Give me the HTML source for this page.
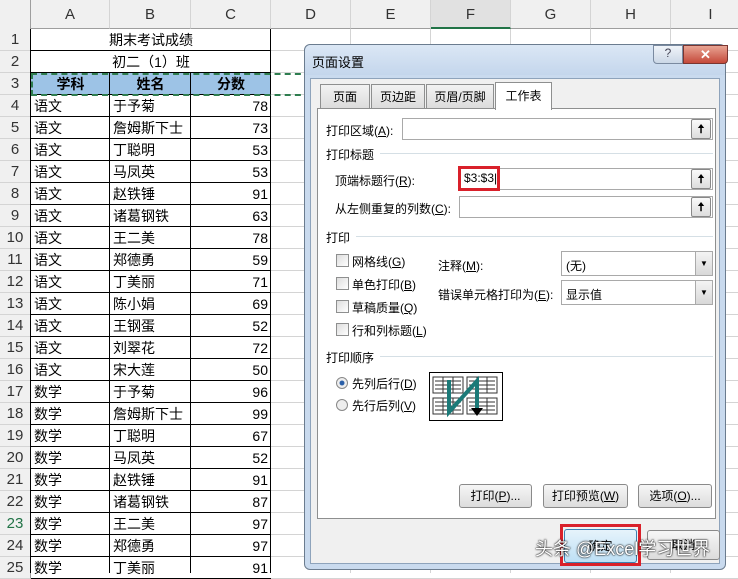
<!DOCTYPE html><html><head><meta charset="utf-8"><style>
*{margin:0;padding:0;box-sizing:border-box}
body{width:738px;height:573px;overflow:hidden;background:#fff;font-family:"Liberation Sans","Noto Sans CJK SC",sans-serif;font-size:14px;position:relative}
.a{position:absolute}
.hdr{background:#f0f0f0;color:#333;text-align:center;font-size:15px}
.c{position:absolute;height:22px;line-height:22px;font-size:14px;white-space:nowrap}
.d{font-size:12px;color:#000;position:absolute;white-space:nowrap}
.box{position:absolute;background:#fff;border:1px solid #a9a9a9}
.up{position:absolute;width:20px;height:20px;border:1px solid #888;border-radius:2px;background:linear-gradient(#fafafa,#ddd);font-size:12px;text-align:center;line-height:18px;font-weight:bold}
.btn{position:absolute;height:24px;border:1px solid #8a8a8a;border-radius:3px;background:linear-gradient(#f6f6f6,#dcdcdc);font-size:12px;text-align:center;line-height:22px}
.cb{position:absolute;width:13px;height:13px;border:1px solid #8e8f8f;background:linear-gradient(135deg,#ddd,#fff)}
.sep{position:absolute;height:1px;background:#d5dfe5}
</style></head><body>
<div class="a hdr" style="left:0;top:0;width:738px;height:29px;border-bottom:1px solid #9e9e9e"></div>
<div class="a hdr" style="left:0;top:0;width:31px;height:573px;border-right:1px solid #9e9e9e"></div>
<div id="g"></div>
<script>
var cols=[[31,110,'A'],[110,191,'B'],[191,271,'C'],[271,351,'D'],[351,431,'E'],[431,511,'F'],[511,591,'G'],[591,671,'H'],[671,751,'I']];
var h='';
cols.forEach(function(c){h+='<div class="a hdr" style="left:'+c[0]+'px;top:0;width:'+(c[1]-c[0])+'px;height:29px;line-height:29px;border-right:1px solid #d4d4d4;border-bottom:1px solid #9e9e9e;'+(c[2]=='F'?'background:#e1e1e1;border-bottom:2px solid #217346;':'')+'">'+c[2]+'</div>';});
var data=[['语文','于予菊',78],['语文','詹姆斯下士',73],['语文','丁聪明',53],['语文','马凤英',53],['语文','赵铁锤',91],['语文','诸葛钢铁',63],['语文','王二美',78],['语文','郑德勇',59],['语文','丁美丽',71],['语文','陈小娟',69],['语文','王钢蛋',52],['语文','刘翠花',72],['语文','宋大莲',50],['数学','于予菊',96],['数学','詹姆斯下士',99],['数学','丁聪明',67],['数学','马凤英',52],['数学','赵铁锤',91],['数学','诸葛钢铁',87],['数学','王二美',97],['数学','郑德勇',97],['数学','丁美丽',91]];
for(var r=0;r<25;r++){var y=29+r*22;
h+='<div class="a hdr" style="left:0;top:'+y+'px;width:31px;height:22px;line-height:22px;border-bottom:1px solid #d4d4d4;border-right:1px solid #9e9e9e;'+(r==22?'color:#217346;':'')+'">'+(r+1)+'</div>';
h+='<div class="a" style="left:31px;top:'+(y+21)+'px;width:707px;height:1px;background:#d4d4d4"></div>';}
[271,351,431,511,591,671].forEach(function(x){h+='<div class="a" style="left:'+(x-1)+'px;top:29px;width:1px;height:544px;background:#d4d4d4"></div>';});
h+='<div class="c" style="left:31px;top:29px;width:240px;text-align:center">期末考试成绩</div>';
h+='<div class="c" style="left:31px;top:51px;width:240px;text-align:center">初二（1）班</div>';
h+='<div class="a" style="left:31px;top:73px;width:240px;height:22px;background:#9dc3e6"></div>';
[['学科',31,110],['姓名',110,191],['分数',191,271]].forEach(function(t){h+='<div class="c" style="left:'+t[1]+'px;top:73px;width:'+(t[2]-t[1])+'px;text-align:center;font-weight:bold">'+t[0]+'</div>';});
for(var i=0;i<data.length;i++){var y=95+i*22;
h+='<div class="c" style="left:34px;top:'+y+'px">'+data[i][0]+'</div><div class="c" style="left:113px;top:'+y+'px">'+data[i][1]+'</div><div class="c" style="left:191px;top:'+y+'px;width:77px;text-align:right">'+data[i][2]+'</div>';}
// black borders for table
for(var r=0;r<25;r++){var y=29+r*22;if(r>=2)h+='<div class="a" style="left:31px;top:'+(y+21)+'px;width:240px;height:1px;background:#000"></div>';}
h+='<div class="a" style="left:30px;top:29px;width:1px;height:544px;background:#000"></div>';
h+='<div class="a" style="left:270px;top:29px;width:1px;height:544px;background:#000"></div>';
h+='<div class="a" style="left:31px;top:50px;width:240px;height:1px;background:#000"></div>';
h+='<div class="a" style="left:31px;top:72px;width:240px;height:1px;background:#000"></div>';
h+='<div class="a" style="left:109px;top:73px;width:1px;height:500px;background:#000"></div>';
h+='<div class="a" style="left:190px;top:73px;width:1px;height:500px;background:#000"></div>';
h+='<div class="a" style="left:31px;top:73px;width:280px;height:23px;border:2px dashed #2e7d4f"></div>';
document.getElementById('g').innerHTML=h;
</script>
<!-- dialog -->
<div class="a" style="left:304px;top:44px;width:422px;height:526px;border:1px solid #6b7c8f;border-radius:6px;background:#c9daee"></div>
<div class="a" style="left:305px;top:45px;width:420px;height:30px;border-radius:6px 6px 0 0;background:linear-gradient(#dbe7f5,#c4d6ec)"></div>
<div class="d" style="left:312px;top:52px;font-size:13px">页面设置</div>
<div class="a" style="left:653px;top:45px;width:30px;height:19px;border:1px solid #7a8aa0;border-radius:0 0 0 4px;background:linear-gradient(#f0f4f9,#cbd7e6);text-align:center;font-size:12px;color:#445">?</div>
<div class="a" style="left:683px;top:45px;width:45px;height:19px;border:1px solid #7a3530;border-radius:0 0 4px 0;background:linear-gradient(#e8a493,#c5493a);text-align:center;font-size:13px;color:#fff;font-weight:bold;line-height:17px">✕</div>
<div class="a" style="left:310px;top:78px;width:410px;height:486px;background:#f0f0f0;border:1px solid #8ea3bb"></div>
<div class="a" style="left:317px;top:108px;width:399px;height:411px;background:#fff;border:1px solid #8e8f8f"></div>
<div class="a" style="left:320px;top:84px;width:50px;height:25px;border:1px solid #8e8f8f;background:linear-gradient(#f2f2f2,#dcdcdc);font-size:12px;text-align:center;line-height:24px">页面</div>
<div class="a" style="left:371px;top:84px;width:54px;height:25px;border:1px solid #8e8f8f;background:linear-gradient(#f2f2f2,#dcdcdc);font-size:12px;text-align:center;line-height:24px">页边距</div>
<div class="a" style="left:426px;top:84px;width:68px;height:25px;border:1px solid #8e8f8f;background:linear-gradient(#f2f2f2,#dcdcdc);font-size:12px;text-align:center;line-height:24px">页眉/页脚</div>
<div class="a" style="left:495px;top:82px;width:57px;height:28px;border:1px solid #8e8f8f;border-bottom:none;background:#fff;font-size:12px;text-align:center;line-height:26px">工作表</div>
<div class="d" style="left:326px;top:122px">打印区域(<u>A</u>):</div>
<div class="box" style="left:402px;top:118px;width:311px;height:22px"></div>
<div class="up" style="left:691px;top:119px">🠅</div>
<div class="d" style="left:326px;top:146px">打印标题</div><div class="sep" style="left:380px;top:153px;width:333px"></div>
<div class="d" style="left:335px;top:172px">顶端标题行(<u>R</u>):</div>
<div class="box" style="left:459px;top:168px;width:254px;height:22px"></div>
<div class="a" style="left:458px;top:166px;width:42px;height:25px;border:3px solid #d9202a"></div>
<div class="d" style="left:464px;top:171px">$3:$3|</div>
<div class="up" style="left:691px;top:169px">🠅</div>
<div class="d" style="left:335px;top:200px">从左侧重复的列数(<u>C</u>):</div>
<div class="box" style="left:459px;top:196px;width:254px;height:22px"></div>
<div class="up" style="left:691px;top:197px">🠅</div>
<div class="d" style="left:326px;top:229px">打印</div><div class="sep" style="left:356px;top:236px;width:357px"></div>
<div class="cb" style="left:336px;top:254px"></div><div class="d" style="left:352px;top:253px">网格线(<u>G</u>)</div>
<div class="cb" style="left:336px;top:277px"></div><div class="d" style="left:352px;top:276px">单色打印(<u>B</u>)</div>
<div class="cb" style="left:336px;top:300px"></div><div class="d" style="left:352px;top:299px">草稿质量(<u>Q</u>)</div>
<div class="cb" style="left:336px;top:323px"></div><div class="d" style="left:352px;top:322px">行和列标题(<u>L</u>)</div>
<div class="d" style="left:438px;top:257px">注释(<u>M</u>):</div>
<div class="box" style="left:561px;top:251px;width:152px;height:25px"><span class="d" style="left:4px;top:5px">(无)</span><div class="a" style="right:0;top:0;width:17px;height:23px;border-left:1px solid #aaa;background:linear-gradient(#f4f4f4,#d8d8d8);font-size:8px;text-align:center;line-height:23px">▼</div></div>
<div class="d" style="left:438px;top:286px">错误单元格打印为(<u>E</u>):</div>
<div class="box" style="left:561px;top:280px;width:152px;height:25px"><span class="d" style="left:4px;top:5px">显示值</span><div class="a" style="right:0;top:0;width:17px;height:23px;border-left:1px solid #aaa;background:linear-gradient(#f4f4f4,#d8d8d8);font-size:8px;text-align:center;line-height:23px">▼</div></div>
<div class="d" style="left:326px;top:349px">打印顺序</div><div class="sep" style="left:380px;top:356px;width:333px"></div>
<div class="a" style="left:336px;top:377px;width:12px;height:12px;border-radius:50%;border:1px solid #888;background:radial-gradient(#2a5fa8 30%,#eee 40%)"></div>
<div class="d" style="left:352px;top:375px">先列后行(<u>D</u>)</div>
<div class="a" style="left:336px;top:399px;width:12px;height:12px;border-radius:50%;border:1px solid #888;background:#eee"></div>
<div class="d" style="left:352px;top:397px">先行后列(<u>V</u>)</div>
<svg class="a" style="left:429px;top:372px" width="74" height="49" viewBox="0 0 74 49">
<rect x="0.5" y="0.5" width="73" height="48" fill="#fff" stroke="#000"/>
<g fill="none" stroke="#333" stroke-width="1">
<rect x="4" y="5" width="30" height="16"/><rect x="38" y="5" width="30" height="16"/><rect x="4" y="26" width="30" height="16"/><rect x="38" y="26" width="30" height="16"/>
<path d="M6 9h26M6 13h26M6 17h26M40 9h26M40 13h26M40 17h26M6 30h26M6 34h26M6 38h26M40 30h26M40 34h26M40 38h26M14 5v16M24 5v16M48 5v16M58 5v16M14 26v16M24 26v16M48 26v16M58 26v16"/></g>
<path d="M20 8v32L48 9v30" fill="none" stroke="#1b7a78" stroke-width="4"/>
<path d="M42 36l6 8 6-8z" fill="#000"/>
</svg>
<div class="btn" style="left:459px;top:484px;width:73px">打印(<u>P</u>)...</div>
<div class="btn" style="left:543px;top:484px;width:85px">打印预览(<u>W</u>)</div>
<div class="btn" style="left:638px;top:484px;width:74px">选项(<u>O</u>)...</div>
<div class="a" style="left:560px;top:524px;width:81px;height:42px;border:3px solid #d9202a"></div>
<div class="btn" style="left:564px;top:529px;width:73px;height:34px;background:linear-gradient(#e6f3fb,#bde0f5);border-color:#3c7fb1;line-height:32px">确定</div>
<div class="btn" style="left:647px;top:530px;width:73px;height:30px;line-height:28px">取消</div>
<div class="a" style="left:535px;top:535px;font-size:18px;color:#fff;text-shadow:0 0 2px #000,0 0 1px #000;white-space:nowrap">头条 @Excel学习世界</div>
</body></html>
